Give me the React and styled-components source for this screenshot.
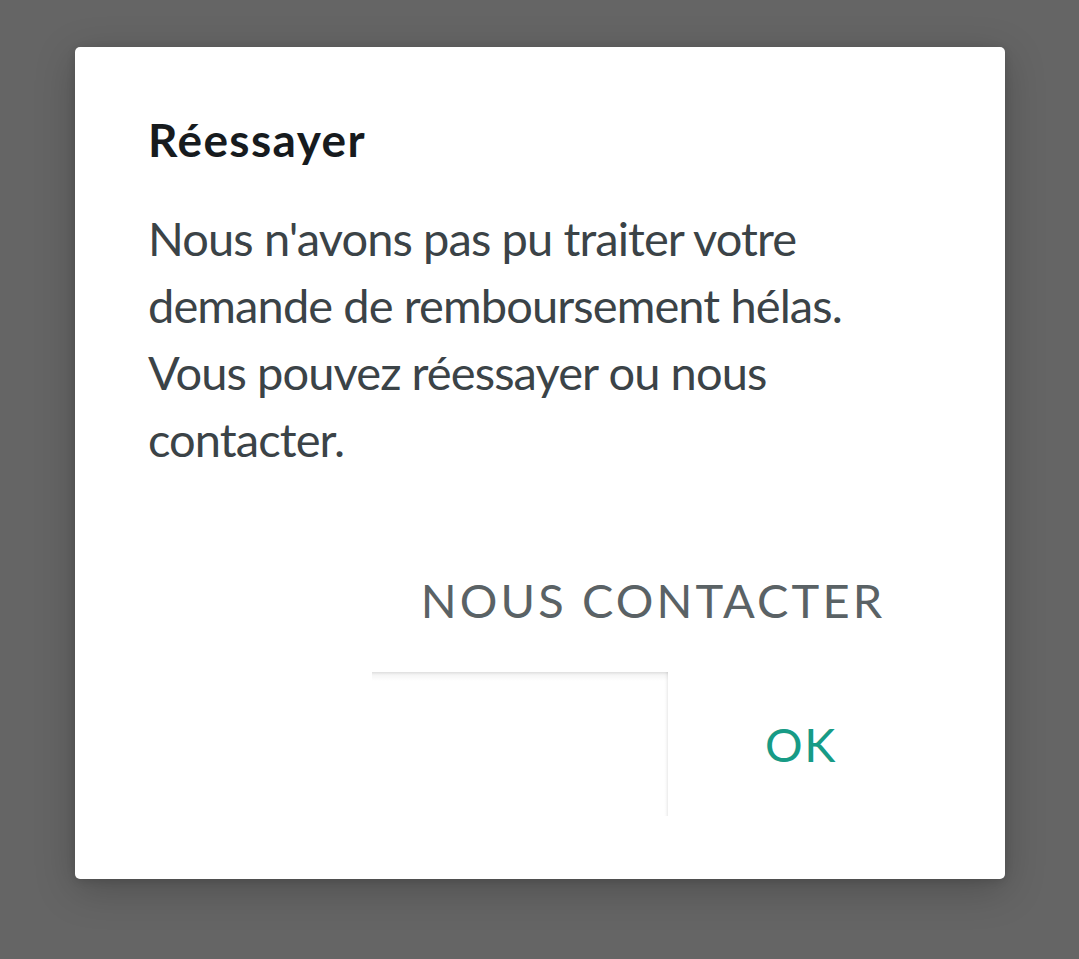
import styled, { createGlobalStyle } from "styled-components"

const GlobalStyle = createGlobalStyle`
  html, body {
    margin: 0;
    padding: 0;
    background: #656565;
  }
  body {
    font-family: Lato, "Open Sans", sans-serif;
    -webkit-font-smoothing: antialiased;
  }
`

export default function App() {
  return (
    <>
      <GlobalStyle />
      <Scrim>
        <Dialog>
          <Title>Réessayer</Title>
          <Message>
            Nous n'avons pas pu traiter votre
            <br />
            demande de remboursement hélas.
            <br />
            Vous pouvez réessayer ou nous
            <br />
            contacter.
          </Message>
          <Actions>
            <ActionButton width={562} tone="neutral">
              NOUS CONTACTER
            </ActionButton>
            <ActionRow>
              <Ghost />
              <ActionButton width={266} tone="accent">
                OK
              </ActionButton>
            </ActionRow>
          </Actions>
        </Dialog>
      </Scrim>
    </>
  )
}

const Scrim = styled.div`
  width: 1079px;
  height: 959px;
  padding: 47px 0 0 75px;
  box-sizing: border-box;
  background: #656565;
`

const Dialog = styled.div`
  width: 930px;
  height: 832px;
  box-sizing: border-box;
  padding: 65px 71px 63px 73px;
  background: #ffffff;
  border-radius: 5px;
  box-shadow: 0 10px 40px rgba(0, 0, 0, 0.22), 0 2px 8px rgba(0, 0, 0, 0.12);
  display: flex;
  flex-direction: column;
`

const Title = styled.h1`
  margin: 0;
  font-size: 46px;
  line-height: 56px;
  font-weight: 700;
  letter-spacing: 1.4px;
  color: #171b1e;
`

const Message = styled.p`
  margin: 37px 0 0;
  font-size: 47px;
  line-height: 67px;
  font-weight: 400;
  letter-spacing: -0.9px;
  color: #3b4347;
`

const Actions = styled.div`
  margin-top: auto;
  display: flex;
  flex-direction: column;
  align-items: flex-end;
`

const ActionRow = styled.div`
  display: flex;
`

const ActionButton = styled.div`
  width: ${(p) => p.width}px;
  height: 144px;
  display: flex;
  align-items: center;
  justify-content: center;
  font-size: 47px;
  letter-spacing: ${(p) => (p.tone === "accent" ? "1.6px" : "3.1px")};
  color: ${(p) => (p.tone === "accent" ? "#179b86" : "#5a6265")};
  cursor: pointer;
`

const Ghost = styled.div`
  width: 296px;
  height: 144px;
  background:
    linear-gradient(to bottom, rgba(0, 0, 0, 0.13), rgba(0, 0, 0, 0.04) 3px, rgba(0, 0, 0, 0) 9px),
    linear-gradient(to left, rgba(0, 0, 0, 0.08), rgba(0, 0, 0, 0.02) 2px, rgba(0, 0, 0, 0) 4px);
`
